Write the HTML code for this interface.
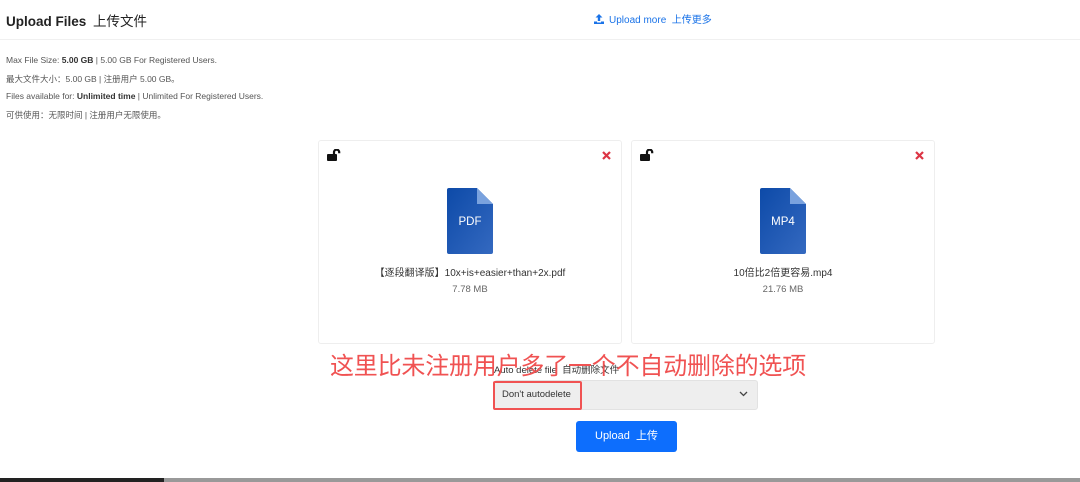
<!DOCTYPE html>
<html><head><meta charset="utf-8"><style>
*{margin:0;padding:0;box-sizing:border-box}
body{width:1080px;height:482px;background:#fff;font-family:"Liberation Sans","Noto Sans CJK SC",sans-serif;position:relative;overflow:hidden;color:#212529}
.abs{position:absolute}
.info{font-size:8.5px;color:#555;left:6px}
.info b{color:#333}
.card{position:absolute;top:140px;width:304px;height:204px;border:1px solid #eee;border-radius:3px}
.file{position:absolute;left:128px;top:47px;width:46px;height:66px}
.fn{position:absolute;left:0;right:0;text-align:center;font-size:10px;color:#333}
.sz{position:absolute;left:0;right:0;text-align:center;font-size:9.5px;color:#666}
</style></head><body>
<div class="abs" style="left:6px;top:10px;font-size:13.5px;font-weight:bold;color:#222">Upload Files <span style="font-weight:normal;margin-left:3px">上传文件</span></div>
<div class="abs" style="left:0;top:39px;width:1080px;height:1px;background:#f0f0f0"></div>
<div class="abs" style="left:593px;top:11px;font-size:10px;color:#1a73e8;display:flex;align-items:center">
<svg width="12" height="12" viewBox="0 0 12 12" style="margin-right:4px"><path d="M6 1L2.5 4.5h2.3V8h2.4V4.5h2.3z M1 8.5h3v1h4v-1h3V11H1z" fill="#1a73e8"/></svg>Upload more&nbsp; 上传更多</div>
<div class="abs info" style="top:55px">Max File Size: <b>5.00 GB</b> | 5.00 GB For Registered Users.</div>
<div class="abs info" style="top:73px">最大文件大小：5.00 GB | 注册用户 5.00 GB。</div>
<div class="abs info" style="top:91px">Files available for: <b>Unlimited time</b> | Unlimited For Registered Users.</div>
<div class="abs info" style="top:109px">可供使用：无限时间 | 注册用户无限使用。</div>

<div class="card" style="left:318px">
<svg class="abs" style="left:8px;top:8px" width="14" height="12" viewBox="0 0 14 12"><rect x="0" y="5" width="10" height="7" rx="1" fill="#111"/><path d="M7 5.5V3.2a2.6 2.6 0 0 1 5.2 0v1" stroke="#111" stroke-width="2.2" fill="none"/></svg>
<svg class="abs" style="left:283px;top:10px" width="9" height="9" viewBox="0 0 9 9"><path d="M1 1L8 8M8 1L1 8" stroke="#dc3545" stroke-width="2.2"/></svg>
<svg class="file" viewBox="0 0 46 66"><defs><linearGradient id="g" x1="0" y1="0" x2="1" y2="1"><stop offset="0" stop-color="#0d4aa8"/><stop offset="1" stop-color="#3469c0"/></linearGradient></defs><path d="M2 0H30L46 16V64a2 2 0 0 1-2 2H2a2 2 0 0 1-2-2V2a2 2 0 0 1 2-2z" fill="url(#g)"/><path d="M30 0L46 16H30z" fill="#7aa2de"/><text x="23" y="37" text-anchor="middle" font-family="Liberation Sans" font-size="11.5" fill="#fff">PDF</text></svg>
<div class="fn" style="top:123px">【逐段翻译版】10x+is+easier+than+2x.pdf</div>
<div class="sz" style="top:143px">7.78 MB</div>
</div>
<div class="card" style="left:631px">
<svg class="abs" style="left:8px;top:8px" width="14" height="12" viewBox="0 0 14 12"><rect x="0" y="5" width="10" height="7" rx="1" fill="#111"/><path d="M7 5.5V3.2a2.6 2.6 0 0 1 5.2 0v1" stroke="#111" stroke-width="2.2" fill="none"/></svg>
<svg class="abs" style="left:283px;top:10px" width="9" height="9" viewBox="0 0 9 9"><path d="M1 1L8 8M8 1L1 8" stroke="#dc3545" stroke-width="2.2"/></svg>
<svg class="file" viewBox="0 0 46 66" style="left:128px"><path d="M2 0H30L46 16V64a2 2 0 0 1-2 2H2a2 2 0 0 1-2-2V2a2 2 0 0 1 2-2z" fill="url(#g)"/><path d="M30 0L46 16H30z" fill="#7aa2de"/><text x="23" y="37" text-anchor="middle" font-family="Liberation Sans" font-size="11.5" fill="#fff">MP4</text></svg>
<div class="fn" style="top:123px">10倍比2倍更容易.mp4</div>
<div class="sz" style="top:143px">21.76 MB</div>
</div>

<div class="abs" style="left:494px;top:362px;font-size:9.5px;color:#333">Auto delete file&nbsp; 自动删除文件</div>
<div class="abs" style="left:330px;top:346px;font-size:24px;color:#f05252;white-space:nowrap;letter-spacing:-0.2px">这里比未注册用户多了一个不自动删除的选项</div>
<div class="abs" style="left:494px;top:380px;width:264px;height:30px;background:#eee;border:1px solid #e2e2e2;border-radius:3px"></div>
<svg class="abs" style="left:739px;top:391px" width="9" height="6" viewBox="0 0 9 6"><path d="M1 1l3.5 3.5L8 1" stroke="#444" stroke-width="1.3" fill="none"/></svg>
<div class="abs" style="left:493px;top:381px;width:89px;height:29px;border:2px solid #f05252;border-radius:2px"></div>
<div class="abs" style="left:502px;top:389px;font-size:9.5px;color:#333">Don't autodelete</div>
<div class="abs" style="left:576px;top:421px;width:101px;height:31px;background:#0d6efd;border-radius:3px;color:#fff;font-size:11px;text-align:center;line-height:30px">Upload&nbsp; 上传</div>

<div class="abs" style="left:0;top:478px;width:1080px;height:4px;background:#999"></div>
<div class="abs" style="left:0;top:478px;width:164px;height:4px;background:#222"></div>
</body></html>
